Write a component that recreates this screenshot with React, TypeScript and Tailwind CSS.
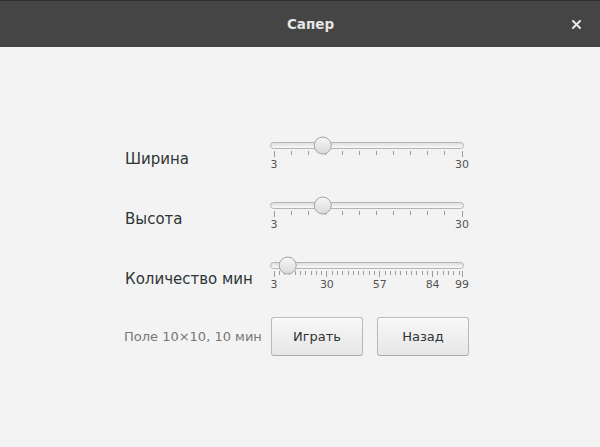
import React from 'react';

interface SliderProps {
  min: number;
  max: number;
  value: number;
  ticks: { v: number; major: boolean }[];
  labels: number[];
}

// tick range inside the 204px-wide slider box
const X0 = 8;
const SPAN = 188;

const Slider: React.FC<SliderProps> = ({ min, max, value, ticks, labels }) => {
  const pos = (v: number) => X0 + ((v - min) / (max - min)) * SPAN;
  return (
    <div className="relative w-[204px] h-[40px]">
      <svg width="204" height="26" viewBox="0 0 204 26" className="block">
        <defs>
          <linearGradient id="trk" x1="0" y1="0" x2="0" y2="1">
            <stop offset="0" stopColor="#dcdcdc" />
            <stop offset="1" stopColor="#fbfbfb" />
          </linearGradient>
          <linearGradient id="thm" x1="0" y1="0" x2="0" y2="1">
            <stop offset="0" stopColor="#f7f7f7" />
            <stop offset="1" stopColor="#d9d9d9" />
          </linearGradient>
        </defs>
        <rect x="4.5" y="9.5" width="193" height="6" rx="3" fill="url(#trk)" stroke="#b4b4b4" />
        {ticks.map((t, i) => (
          <line
            key={i}
            x1={pos(t.v)}
            x2={pos(t.v)}
            y1={18}
            y2={t.major ? 24 : 22}
            stroke="#9a9a9a"
            strokeWidth="1"
            shapeRendering="crispEdges"
          />
        ))}
        <circle cx={pos(value)} cy="12.5" r="8.5" fill="url(#thm)" stroke="#a3a3a3" />
      </svg>
      {labels.map((l) => (
        <span
          key={l}
          className="absolute top-[26px] -translate-x-1/2 text-[11px] leading-[11px] text-[#555] font-['DejaVu_Sans',sans-serif]"
          style={{ left: pos(l) }}
        >
          {l}
        </span>
      ))}
    </div>
  );
};

const evenTicks = (min: number, max: number, n: number) =>
  Array.from({ length: n + 1 }, (_, i) => ({ v: min + ((max - min) * i) / n, major: i === 0 || i === n }));

const mineTicks = () => {
  const out: { v: number; major: boolean }[] = [];
  for (let i = 0; 3 + i * 2.7 < 99 - 0.1; i++) out.push({ v: 3 + i * 2.7, major: i % 10 === 0 });
  out.push({ v: 99, major: true });
  return out;
};

const Row: React.FC<{ label: string; children: React.ReactNode }> = ({ label, children }) => (
  <div className="flex h-[60px]">
    <div className="w-[142px] pl-[1px] pt-[17px] text-[15px] leading-[18px] text-[#2e3436]">{label}</div>
    {children}
  </div>
);

const Button: React.FC<{ children: React.ReactNode }> = ({ children }) => (
  <button
    type="button"
    className="w-[92px] h-[39px] rounded-[3px] border border-[#b9b9b9] border-b-[#a9a9a9] bg-gradient-to-b from-[#f8f8f8] to-[#e6e6e6] text-[13px] text-[#2e3436] shadow-[inset_0_1px_0_#fff]"
  >
    {children}
  </button>
);

export default function App() {
  return (
    <div className="w-[600px] h-[447px] flex flex-col bg-[#f3f3f3] font-['DejaVu_Sans',sans-serif] overflow-hidden">
      <div className="h-[47px] shrink-0 bg-[#454545] border-t border-[#2e2e2e] flex items-center justify-between pl-[40px] pr-[19px]">
        <div className="w-[20px]" />
        <span className="text-[13.5px] font-bold text-[#e6e6e6]">Сапер</span>
        <div className="w-[20px] flex justify-end">
          <svg width="9" height="9" viewBox="0 0 9 9" className="block">
            <path d="M1 1 L8 8 M8 1 L1 8" stroke="#e6e6e6" strokeWidth="2" strokeLinecap="square" />
          </svg>
        </div>
      </div>
      <div className="flex flex-col pl-[124px] pt-[86px]">
        <Row label="Ширина">
          <Slider min={3} max={30} value={10} ticks={evenTicks(3, 30, 11)} labels={[3, 30]} />
        </Row>
        <Row label="Высота">
          <Slider min={3} max={30} value={10} ticks={evenTicks(3, 30, 11)} labels={[3, 30]} />
        </Row>
        <Row label="Количество мин">
          <Slider min={3} max={99} value={10} ticks={mineTicks()} labels={[3, 30, 57, 84, 99]} />
        </Row>
        <div className="flex items-center mt-[4px]">
          <span className="w-[147px] text-[13px] text-[#777]">Поле 10×10, 10 мин</span>
          <div className="flex gap-[14px]">
            <Button>Играть</Button>
            <Button>Назад</Button>
          </div>
        </div>
      </div>
    </div>
  );
}
